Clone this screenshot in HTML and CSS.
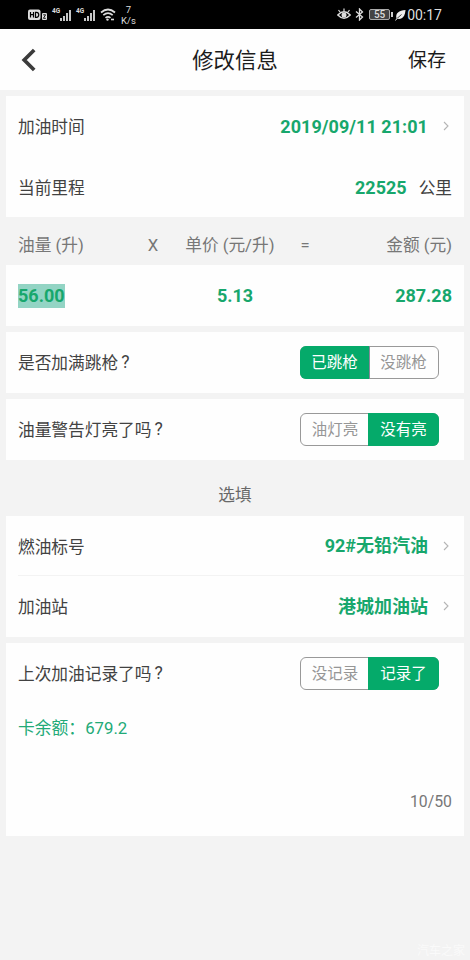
FILE: index.html
```html
<!DOCTYPE html>
<html lang="zh-CN">
<head>
<meta charset="utf-8">
<title>修改信息</title>
<link rel="stylesheet" href="styles.css">
</head>
<body>
<div class="status">
  <div class="status-left">
    <svg class="hd" width="20" height="12" viewBox="0 0 20 12"><rect x="0" y="0.5" width="12.5" height="10.5" rx="2" fill="#ddd"/><path d="M2.5 3v5.5M5.5 3v5.5M2.5 5.7h3M7.5 3.3v5h1c3 0 3-5 0-5z" fill="none" stroke="#000" stroke-width="1.2"/><rect x="14" y="4" width="5" height="7" rx="1" fill="#ddd"/><path d="M15.2 5.8h2.4L15.4 9.3h2.4" fill="none" stroke="#000" stroke-width=".9"/></svg>
    <div class="signal"><span>4G</span><svg width="12" height="12" viewBox="0 0 12 12"><path d="M1 12V9M4 12V7M7 12V4M10 12V1" stroke="#ddd" stroke-width="1.8"/></svg></div>
    <div class="signal second"><span>4G</span><svg width="12" height="12" viewBox="0 0 12 12"><path d="M1 12V9M4 12V7M7 12V4M10 12V1" stroke="#ddd" stroke-width="1.8"/></svg></div>
    <svg class="wifi" width="16" height="13" viewBox="0 0 16 13"><path d="M1 4.5q7-6 14 0M3.3 7.2q4.7-4 9.4 0M5.5 9.8q2.5-2 5 0" fill="none" stroke="#ddd" stroke-width="1.7"/><circle cx="7.5" cy="11.6" r="1.2" fill="#ddd"/><path d="M11 11.5h3" stroke="#ddd" stroke-width="1.6"/></svg>
    <div class="speed"><span>7</span><span>K/s</span></div>
  </div>
  <div class="status-right">
    <svg width="14" height="13" viewBox="0 0 14 13"><path d="M.8 7Q7 .5 13.2 7 7 13.5.8 7z" fill="none" stroke="#ddd" stroke-width="1.4"/><circle cx="7" cy="7" r="2.5" fill="#ddd"/><path d="M7 3V.5M3 4 1.5 2M11 4l1.5-2" stroke="#ddd" stroke-width="1.2"/></svg>
    <svg class="bt" width="9" height="13" viewBox="0 0 9 13"><path d="M1 3.5 7.5 9 4.5 12V1l3 3L1 9.5" fill="none" stroke="#ddd" stroke-width="1.3"/></svg>
    <div class="battery">55</div><i class="battery-tip"></i>
    <svg class="leaf" width="11" height="12" viewBox="0 0 11 12"><path d="M10.5 1C4 1.5 0 4 1.5 9.5 7 11 10 8 10.5 1z" fill="#eee"/><path d="M2 9.5 6.5 5.5" stroke="#000" stroke-width=".7"/><path d="M.4 11.5 2.5 9" stroke="#eee"/></svg>
    <span class="clock">00:17</span>
  </div>
</div>
<header class="header">
  <svg width="18" height="24" viewBox="0 0 18 24"><path d="M15.2 2 5.2 12l10 10" fill="none" stroke="#3b3b3b" stroke-width="3.7"/></svg>
  <h1>修改信息</h1>
  <span class="save">保存</span>
</header>
<main>
  <section class="card">
    <div class="row"><span class="label">加油时间</span><b class="value date">2019/09/11 21:01</b><svg class="arrow" viewBox="0 0 6 10"><path d="m1 1 4 4-4 4"/></svg></div>
    <div class="row"><span class="label">当前里程</span><b class="value">22525</b><span class="unit">公里</span></div>
  </section>
  <div class="columns"><span>油量 (升)</span><span class="times">X</span><span class="price">单价 (元/升)</span><span class="equals">=</span><span class="amount">金额 (元)</span></div>
  <section class="card">
    <div class="row numbers"><b><mark>56.00</mark></b><b>5.13</b><b>287.28</b></div>
  </section>
  <section class="card">
    <div class="row"><span class="label">是否加满跳枪<i class="q">?</i></span><div class="toggle"><span class="on">已跳枪</span><span>没跳枪</span></div></div>
  </section>
  <section class="card">
    <div class="row"><span class="label">油量警告灯亮了吗<i class="q">?</i></span><div class="toggle"><span>油灯亮</span><span class="on">没有亮</span></div></div>
  </section>
  <div class="optional">选填</div>
  <section class="card options">
    <div class="row"><span class="label">燃油标号</span><b class="value">92#无铅汽油</b><svg class="arrow" viewBox="0 0 6 10"><path d="m1 1 4 4-4 4"/></svg></div>
    <div class="row"><span class="label">加油站</span><b class="value">港城加油站</b><svg class="arrow" viewBox="0 0 6 10"><path d="m1 1 4 4-4 4"/></svg></div>
  </section>
  <section class="card record">
    <div class="row"><span class="label">上次加油记录了吗<i class="q">?</i></span><div class="toggle"><span>没记录</span><span class="on">记录了</span></div></div>
    <div class="note">卡余额：679.2</div>
    <div class="count">10/50</div>
  </section>
</main>
<div class="watermark">汽车之家</div>
</body>
</html>
```
FILE: styles.css
```css
* { box-sizing: border-box; }
body { margin: 0; height: 960px; overflow: hidden; position: relative; background: #f3f3f3; color: #424242; font: 16.7px/24px Roboto, "Noto Sans CJK SC", sans-serif; }
svg { display: block; flex: none; }
.status { height: 29px; background: #000; color: #ddd; display: flex; justify-content: space-between; padding: 0 28px; }
.status-left, .status-right { display: flex; align-items: center; }
.signal { display: flex; align-items: flex-end; height: 13px; margin-left: 4px; }
.signal span { font-size: 6.5px; line-height: 6px; font-weight: 700; align-self: flex-start; width: 8px; }
.signal.second { margin-left: 4px; }
.wifi { margin-left: 4px; }
.speed { font-size: 9.5px; line-height: 11px; text-align: center; margin-left: 5px; display: flex; flex-direction: column; }
.bt { margin-left: 4px; }
.battery { width: 21px; height: 11px; border: 1px solid #aaa; border-radius: 2px; background: #444; font-size: 10px; font-weight: 500; line-height: 10px; text-align: center; margin-left: 5px; }
.battery-tip { width: 2px; height: 5px; background: #ccc; margin-left: 1px; }
.leaf { margin-left: 2px; }
.clock { font-size: 14px; margin-left: 1px; }
.header { height: 61px; background: #fefefe; color: #1c1c1c; display: grid; grid-template-columns: 1fr auto 1fr; align-items: center; padding: 2px 24px 0 19px; }
.header svg { margin-top: -2px; }
.header h1 { margin: 0 0 0 5px; font-size: 21.4px; font-weight: 400; }
.save { justify-self: end; font-size: 19px; }
main { padding: 6px 6px 0; }
.card { background: #fefefe; margin-bottom: 6px; }
.card:first-child { height: 121px; }
.row { height: 61px; padding: 0 12px; display: flex; align-items: center; }
.label, .unit { padding-top: 3px; }
.value, .numbers b { color: #17a76c; font-size: 18px; font-weight: 700; }
.date { letter-spacing: .05px; }
.value { margin-left: auto; }
.arrow { width: 6px; height: 10px; margin: -1px 3px 0 15px; fill: none; stroke: #b5b5b5; stroke-width: 1.1; }
.unit { margin-left: 12px; }
.columns { display: flex; align-items: center; height: 42px; padding: 4px 12px 0; color: #777; white-space: nowrap; }
.times { margin-left: 64px; }
.price { margin-left: 27px; }
.equals { margin-left: 26px; }
.amount { margin-left: auto; }
.numbers { display: grid; grid-template-columns: 1fr auto 1fr; }
.numbers b:last-child { text-align: right; }
mark { background: #93d4c4; color: inherit; display: inline-block; }
.q { display: inline-block; font-style: normal; font-size: 17.5px; line-height: 20px; margin-left: 3px; transform: translateY(-1px); }
.toggle { margin: 0 13px 0 auto; display: flex; width: 139px; height: 33px; border: 1px solid #999; border-radius: 6px; color: #969696; font-size: 15.5px; line-height: 33px; }
.toggle span { flex: 0 0 69px; text-align: center; }
.toggle span:first-child { flex-basis: 68px; }
.toggle .on { background: #05aa6a; color: #fff; margin: -1px; line-height: 35px; }
.toggle .on:first-child { flex-basis: 70px; border-radius: 6px 0 0 6px; border-right: 1px solid #889; }
.toggle .on:last-child { flex-basis: 71px; border-radius: 0 6px 6px 0; }
.optional { height: 50px; padding-top: 10px; display: flex; align-items: center; justify-content: center; color: #686868; }
.options .row { height: 60px; }
.options .row:first-child { background: linear-gradient(#f3f3f3, #f3f3f3) 12px 100% / 100% 1px no-repeat; }
.options .row:last-child { height: 61px; }
.record { height: 193px; }
.note { color: #22aa77; font-size: 16.8px; padding: 12px 12px 0; }
.count { color: #777; padding: 50px 12px 0; text-align: right; font-size: 15.8px; }
.watermark { position: absolute; right: 5px; bottom: 0; font-size: 12px; line-height: 18px; color: #fafafa; }
```
